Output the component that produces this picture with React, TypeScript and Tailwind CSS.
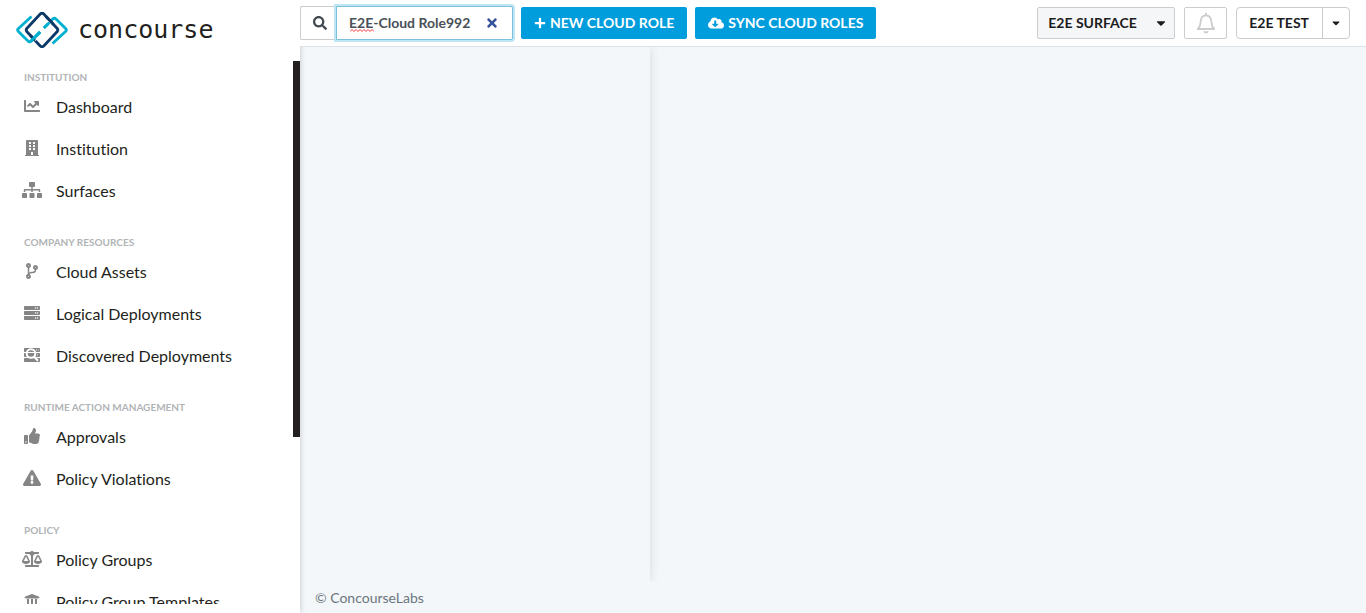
import React from "react";
import {
  FaBalanceScale,
  FaBuilding,
  FaCaretDown,
  FaChartLine,
  FaCloudDownloadAlt,
  FaCodeBranch,
  FaExclamationTriangle,
  FaPlus,
  FaSearch,
  FaServer,
  FaSitemap,
  FaThumbsUp,
  FaTimes,
  FaUniversity,
} from "react-icons/fa";

function DiscoveredIcon({ className }: { className?: string }) {
  return (
    <svg viewBox="0 0 16 16" className={className} fill="none" aria-hidden="true">
      <path
        fill="currentColor"
        d="M.7 1h14.6q.7 0 .7.7v2.6q0 .7-.7.7H.7Q0 5 0 4.300V1.700Q0 1 .7 1zM.7 6h14.600q.7 0 .7.7v2.600q0 .7-.7.7H.7q-.7 0-.7-.7V6.700Q0 6 .7 6zM.7 11h14.600q.7 0 .7.7v2.600q0 .7-.7.7H.7q-.7 0-.7-.7v-2.600q0-.7.7-.7z"
      />
      <circle cx="7" cy="6.500" r="4.300" stroke="#fff" strokeWidth="2" />
      <path d="M10 9.800l4 4" stroke="#fff" strokeWidth="2.200" />
      <path d="M12 3h.8M13.800 3h.8M13.200 8h.8" stroke="#fff" strokeWidth="1" />
    </svg>
  );
}

type Item = { label: string; icon: React.ComponentType<{ className?: string }>; size: string };

const sections: { title: string; items: Item[] }[] = [
  {
    title: "Institution",
    items: [
      { label: "Dashboard", icon: FaChartLine, size: "size-4" },
      { label: "Institution", icon: FaBuilding, size: "size-4" },
      { label: "Surfaces", icon: FaSitemap, size: "h-4 w-5" },
    ],
  },
  {
    title: "Company Resources",
    items: [
      { label: "Cloud Assets", icon: FaCodeBranch, size: "size-4" },
      { label: "Logical Deployments", icon: FaServer, size: "size-4" },
      { label: "Discovered Deployments", icon: DiscoveredIcon, size: "size-4" },
    ],
  },
  {
    title: "Runtime Action Management",
    items: [
      { label: "Approvals", icon: FaThumbsUp, size: "size-4" },
      { label: "Policy Violations", icon: FaExclamationTriangle, size: "h-4 w-[18px]" },
    ],
  },
  {
    title: "Policy",
    items: [
      { label: "Policy Groups", icon: FaBalanceScale, size: "h-4 w-5" },
      { label: "Policy Group Templates", icon: FaUniversity, size: "size-4" },
    ],
  },
];

function Logo() {
  return (
    <a href="#home" className="flex h-[61px] shrink-0 items-center gap-2.5 pb-px pl-4 text-[#231f20]">
      <svg viewBox="0 0 52 36" className="h-9 w-[52px]" fill="none" strokeWidth="2.800" aria-hidden="true">
        <path
          stroke="#00b0d0"
          d="M15.500 4.500 2.200 16.800q-1.200 1.200 0 2.400L12 29q1.600 1.500 3.200 0l9-9M36.500 31.500 49.800 19.200q1.200-1.200 0-2.400L40 7q-1.600-1.500-3.200 0l-9 9"
        />
        <path
          stroke="#0b3866"
          d="M27.800 34q-1.800 1.500-3.600 0L11 19.800q-1.600-1.800 0-3.600L24.200 2q1.800-1.500 3.600 0L41 16.200q1.600 1.800 0 3.600z"
        />
        <path stroke="#fff" strokeWidth="4" d="m17 23.500 4 4M35 12.500l-4-4" />
        <path stroke="#00b0d0" d="m14.500 29.500 9.500-9.500" />
        <path stroke="#0b3866" d="m30 4.500 7.500 8M14.500 23.500l4.500 4.500" />
        <path stroke="#00b0d0" d="m28 16 5.500-5.500M15 29l9-9" />
      </svg>
      <span className="font-['DejaVu_Sans_Mono',monospace] text-[25px] leading-8">concourse</span>
    </a>
  );
}

function Sidebar() {
  return (
    <aside className="z-10 flex w-[300px] shrink-0 flex-col bg-white pb-[9px] shadow-[0_0_6px_rgba(0,0,0,0.2)]">
      <Logo />
      <div className="flex min-h-0 flex-1">
        <nav className="min-w-0 flex-1 overflow-hidden [font-variant-ligatures:none]">
          {sections.map((section) => (
            <section key={section.title} className="pb-3.5">
              <h2 className="pt-[7px] pl-6 text-[10px] leading-[18px] font-bold text-[#b1b4b6] uppercase">
                {section.title}
              </h2>
              <ul>
                {section.items.map(({ label, icon: Icon, size }) => (
                  <li key={label}>
                    <a href="#nav" className="flex h-[42px] items-center gap-3 pl-5 text-base text-[#231f20]">
                      <span className="flex w-6 justify-center pb-0.5 text-[#858585]">
                        <Icon className={size} />
                      </span>
                      {label}
                    </a>
                  </li>
                ))}
              </ul>
            </section>
          ))}
        </nav>
        <div className="h-[376px] w-[7px] bg-[#231f20]" />
      </div>
    </aside>
  );
}

function SearchBox() {
  return (
    <div className="flex h-[34px]">
      <button
        type="button"
        aria-label="Search"
        className="flex w-9 items-center justify-center rounded-l-xs border border-r-0 border-[#ccc] pl-0.5 text-[#414950]"
      >
        <FaSearch className="size-3.5" />
      </button>
      <div className="relative flex w-[177px]">
        <input
          type="text"
          aria-label="Search cloud roles"
          defaultValue="E2E-Cloud Role992"
          spellCheck={false}
          className="w-full rounded-r-xs border border-[#7dbfdc] bg-white pr-9 pl-3 text-sm font-bold text-[#495057] shadow-[0_0_0_2px_#bfe6f4] outline-none"
        />
        <svg viewBox="0 0 24 3" className="absolute bottom-2 left-3.5 h-[3px] w-6" fill="none" aria-hidden="true">
          <path stroke="#ee3b3b" d="m0 2.500 2-2 2 2 2-2 2 2 2-2 2 2 2-2 2 2 2-2 2 2 2-2 2 2" />
        </svg>
        <button type="button" aria-label="Clear" className="absolute inset-y-0 right-3.5 text-[#36539b]">
          <FaTimes className="size-3.5" />
        </button>
      </div>
    </div>
  );
}

function BellIcon() {
  return (
    <svg viewBox="0 0 20 22" className="h-[22px] w-5" fill="none" stroke="#ccc" strokeWidth="1.800" aria-hidden="true">
      <path
        d="M10 .8v2M1.800 17q2.500-2.200 2.700-6.500C4.700 6 6.400 3.300 10 3.300s5.300 2.700 5.500 7.200q.2 4.300 2.700 6.500z"
        strokeLinejoin="round"
      />
      <path d="M7.200 19.200h5.600q-.8 2.300-2.800 2.300t-2.800-2.300z" fill="#ccc" stroke="none" />
    </svg>
  );
}

const primary =
  "flex h-8 items-center gap-1 rounded-xs bg-[#009ddc] px-[13px] text-sm font-bold text-white uppercase";

function TopBar() {
  return (
    <header className="flex h-[47px] shrink-0 items-center gap-2 border-b border-[#dbe1e6] bg-white pr-4">
      <SearchBox />
      <button type="button" className={primary}>
        <FaPlus className="size-3" />
        New Cloud Role
      </button>
      <button type="button" className={primary}>
        <FaCloudDownloadAlt className="h-3.5 w-4" />
        Sync Cloud Roles
      </button>
      <div className="ml-auto flex items-center gap-[9px] text-sm font-bold text-[#1b1c1d]">
        <div className="relative flex h-8 w-[138px]">
          <select
            aria-label="Surface"
            className="w-full appearance-none rounded-xs border border-[#ccc] bg-[#f5f6f8] pl-2.5 outline-none"
          >
            <option>E2E SURFACE</option>
          </select>
          <FaCaretDown className="pointer-events-none absolute top-[9px] right-[7px] size-3.5" />
        </div>
        <button
          type="button"
          aria-label="Notifications"
          className="flex h-8 w-[43px] items-center justify-center rounded-xs border border-[#ccc]"
        >
          <BellIcon />
        </button>
        <div className="flex h-8 rounded-sm border border-[#ccc]">
          <button type="button" className="pr-[13px] pl-3">
            E2E TEST
          </button>
          <button
            type="button"
            aria-label="Account menu"
            className="flex w-[27px] items-center justify-center border-l border-[#ccc]"
          >
            <FaCaretDown className="size-3" />
          </button>
        </div>
      </div>
    </header>
  );
}

export default function App() {
  return (
    <div className="flex h-screen overflow-hidden bg-[#f3f7fa] font-[Lato,sans-serif]">
      <Sidebar />
      <div className="flex min-w-0 flex-1 flex-col">
        <div className="relative z-20 flex flex-col">
          <TopBar />
        </div>
        <main className="flex min-h-0 flex-1 overflow-hidden">
          <section aria-label="Cloud roles" className="w-[350px] shadow-[0_0_10px_rgba(0,0,0,0.12)]" />
          <section aria-label="Role details" className="flex-1" />
        </main>
        <footer className="flex h-[31px] shrink-0 items-center pl-[15px] text-sm text-[#6c757d]">
          © ConcourseLabs
        </footer>
      </div>
    </div>
  );
}
